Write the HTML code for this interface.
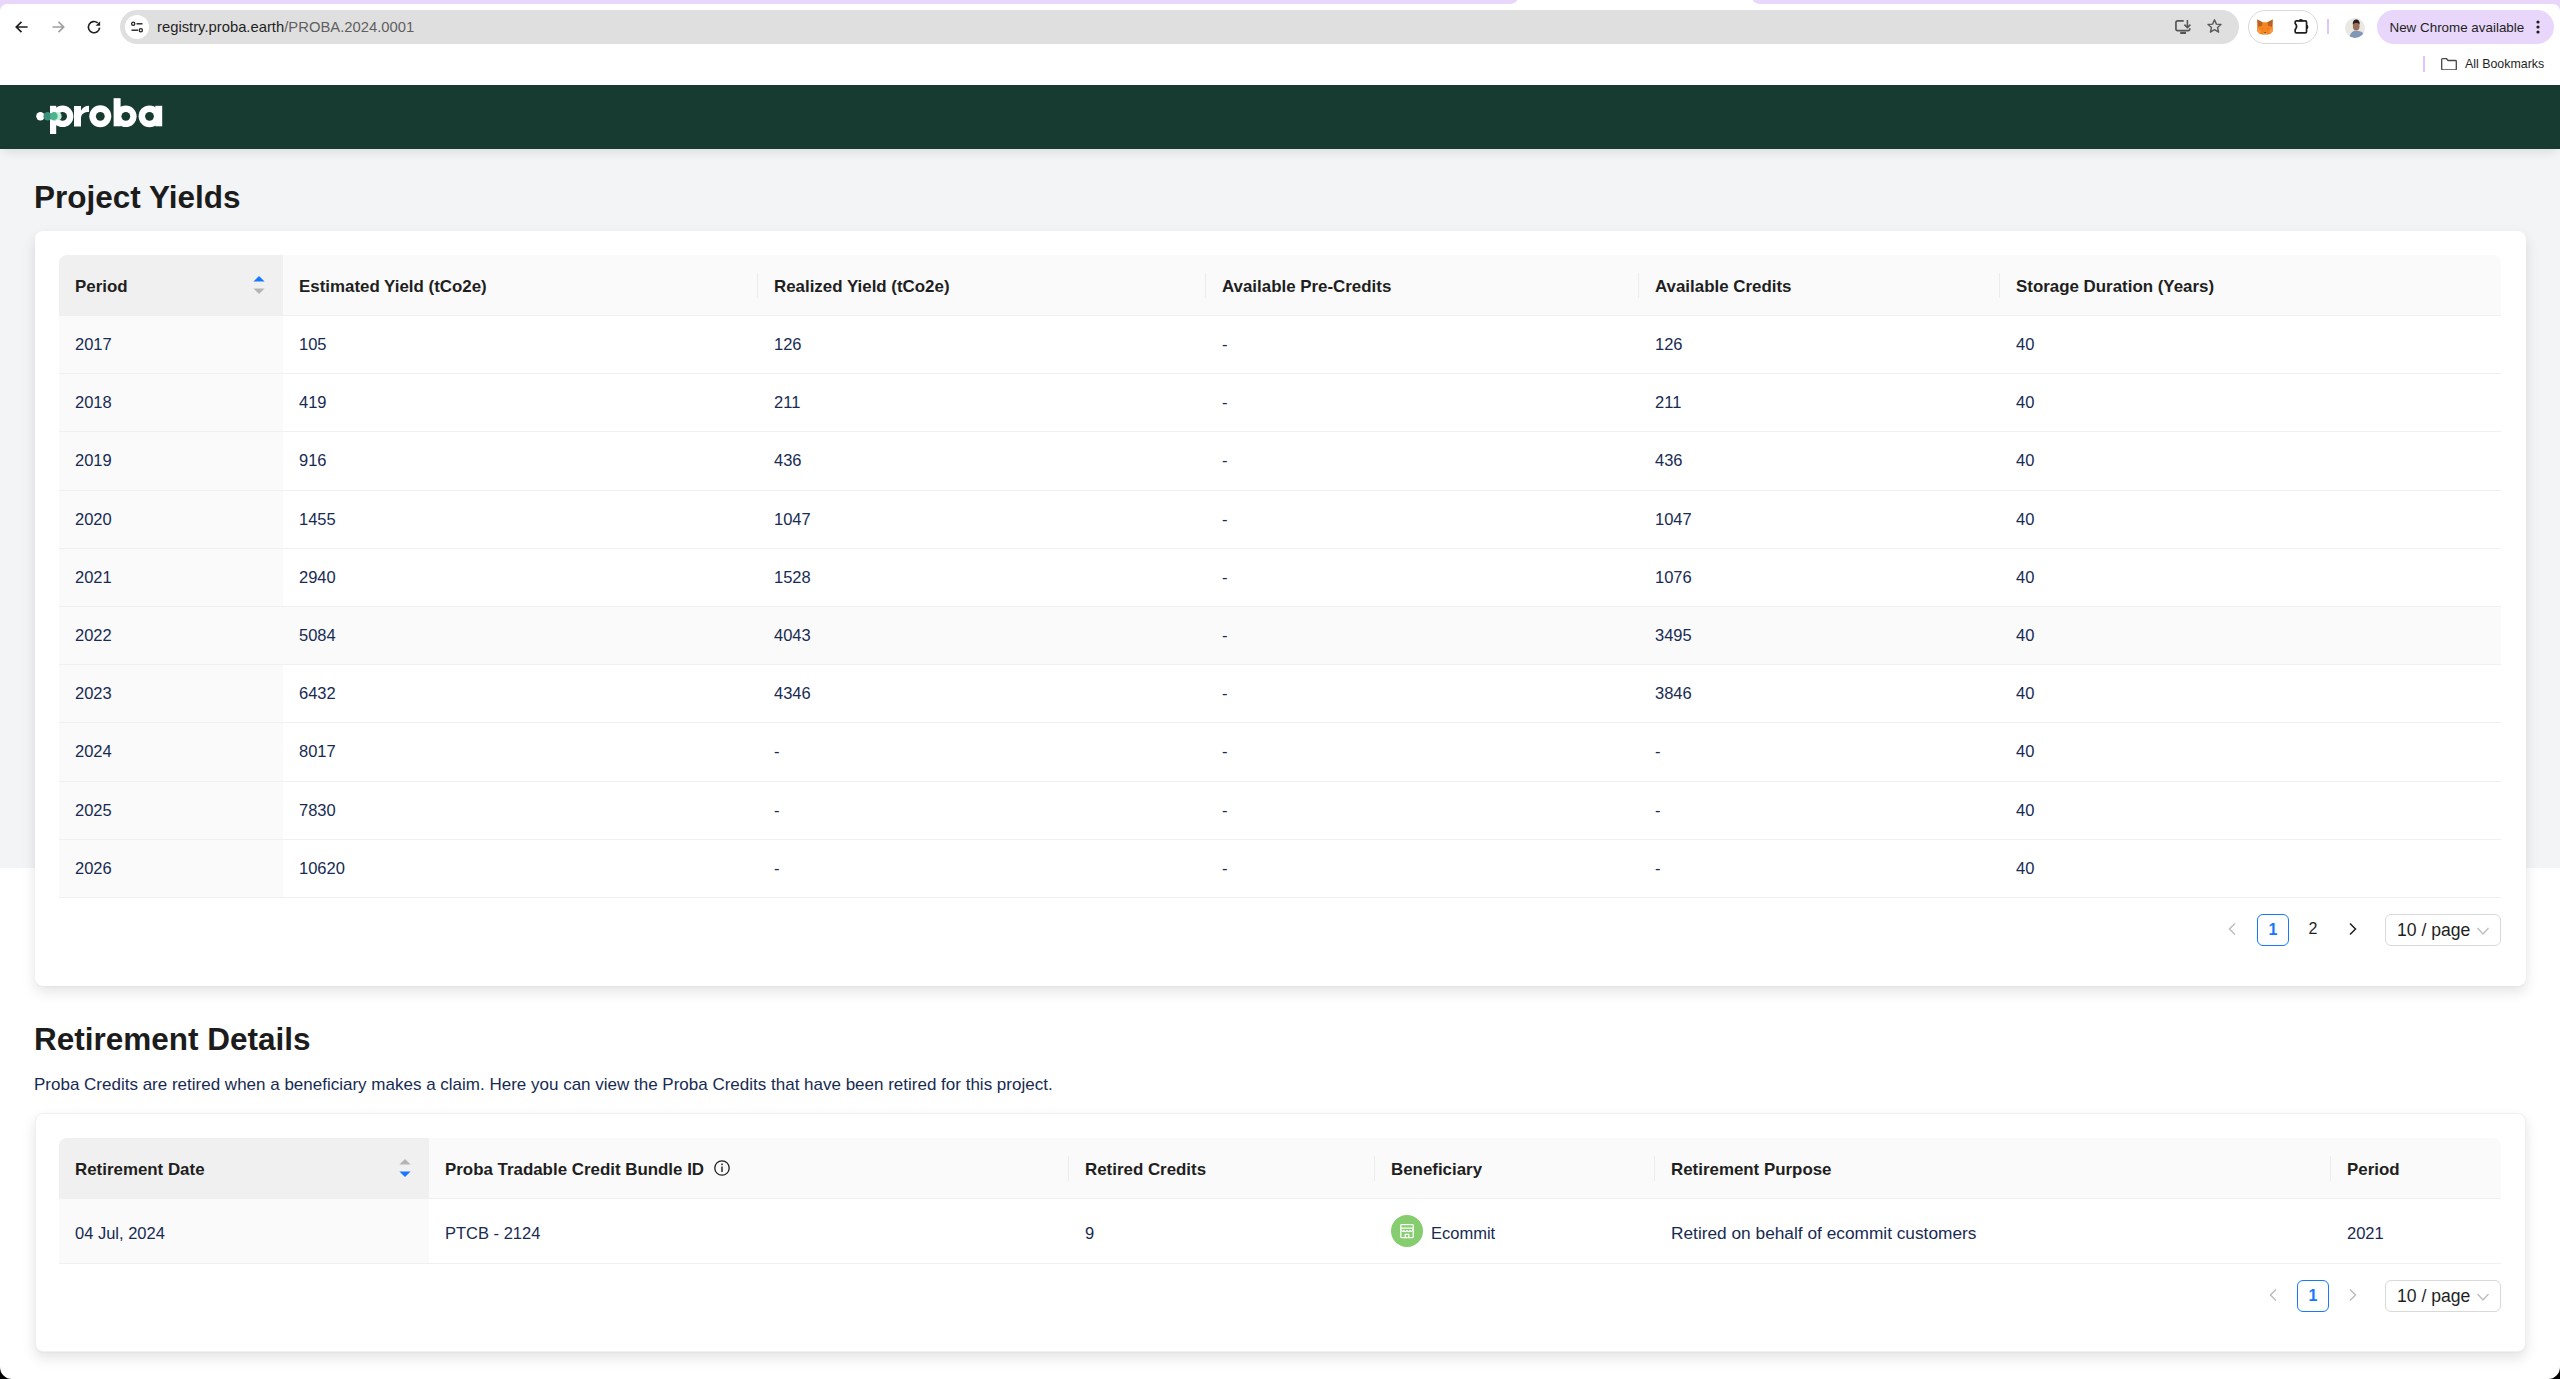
<!DOCTYPE html>
<html><head><meta charset="utf-8">
<style>
*{box-sizing:border-box;margin:0;padding:0}
html,body{width:2560px;height:1379px;overflow:hidden;background:#fff;font-family:"Liberation Sans",sans-serif}
.abs{position:absolute}
#tabbar{position:absolute;left:0;top:0;width:2560px;height:10px;background:#e8d7fb}
#acttab{position:absolute;left:1508px;top:0;width:254px;height:10px;background:#fff}
#tabL{position:absolute;left:0;top:0;width:1517px;height:4px;background:#e8d7fb;border-bottom-right-radius:8px 4px}
#tabR{position:absolute;left:1753px;top:0;width:807px;height:4px;background:#e8d7fb;border-bottom-left-radius:8px 4px}
#toolbar{position:absolute;left:0;top:4px;width:2560px;height:81px;background:#fff;border-radius:7px 7px 0 0}
#omni{position:absolute;left:120px;top:10px;width:2119px;height:34px;background:#dfdfdf;border-radius:17px}
#siteic{position:absolute;left:125px;top:15px;width:24px;height:24px;border-radius:12px;background:#fff}
#url{position:absolute;left:157px;top:18px;font-size:14.8px;line-height:18px;color:#1f1f1f;white-space:nowrap}
#url span{color:#5f5f5f}
#extpill{position:absolute;left:2248px;top:10px;width:70px;height:34px;border:1px solid #d9d9d9;border-radius:17px}
#sep1{position:absolute;left:2327px;top:19px;width:2px;height:15px;background:#dcc6f9}
#avatar{position:absolute;left:2345px;top:17.5px;width:20px;height:20px;border-radius:10px;background:#ebe8e4;overflow:hidden}
#newchrome{position:absolute;left:2377px;top:10px;width:177px;height:34px;border-radius:17px;background:#e8d7fb}
#newchrome .t{position:absolute;left:12.5px;top:9.5px;font-size:13.4px;line-height:16px;color:#1f1f1f;white-space:nowrap}
#sep2{position:absolute;left:2423px;top:56px;width:2px;height:16px;background:#dcc6f9}
#bm{position:absolute;left:2465px;top:57px;font-size:12.4px;line-height:15px;color:#1f1f1f;white-space:nowrap}
#hdr{position:absolute;left:0;top:85px;width:2560px;height:64px;background:#173b30;z-index:3;box-shadow:0 6px 10px -3px rgba(0,0,0,.10)}
#pagebg{position:absolute;left:0;top:149px;width:2560px;height:719px;background:#f3f4f6}
h2{position:absolute;left:34px;font-size:31.5px;font-weight:700;color:#1c1c1c;white-space:nowrap;line-height:38px}
.card{position:absolute;left:35px;width:2491px;background:#fff;border-radius:8px;box-shadow:0 6px 14px 0 rgba(0,0,0,.11),0 1px 2px rgba(0,0,0,.03)}
.tbl{position:absolute;left:59px;width:2442px}
.th{position:absolute;top:0;height:61px;background:#fafafa;border-bottom:1px solid #f0f0f0}
.th .t{position:absolute;left:16px;top:22px;font-size:16.9px;font-weight:700;color:#1f1f1f;white-space:nowrap;line-height:20px}
.th.sc{background:#f0f0f0}
.th .sep{position:absolute;left:-1px;top:18px;width:1px;height:25px;background:#ececec}
.tr{position:absolute;left:0;width:2442px;height:58.2px;border-bottom:1px solid #f0f0f0;background:#fff}
.tr.hov{background:#fafafa}
.td{position:absolute;top:0;height:57.2px;padding-left:16px;font-size:16.5px;line-height:56px;color:#172b53;white-space:nowrap}
.td.sc{background:#fafafa}
p.desc{position:absolute;left:34px;top:1074px;font-size:17px;line-height:22px;color:#172b53;white-space:nowrap}
.pg{position:absolute;height:32px;font-size:16px;line-height:30px;text-align:center;color:#1f1f1f}
.pgact{border:1px solid #1677ff;border-radius:6px;color:#1677ff;font-weight:700}
.sel{border:1px solid #d9d9d9;border-radius:6px;text-align:left;padding-left:11px;font-size:17.6px}
</style></head><body>

<div id="tabbar"></div><div id="acttab"></div><div id="tabL"></div><div id="tabR"></div>
<div id="toolbar"></div>
<!-- nav icons -->
<svg class="abs" style="left:13px;top:18px" width="18" height="18" viewBox="0 0 18 18"><path d="M14.6 9H3.5M8.5 3.8L3.3 9l5.2 5.2" fill="none" stroke="#1f1f1f" stroke-width="1.7"/></svg>
<svg class="abs" style="left:49px;top:18px" width="18" height="18" viewBox="0 0 18 18"><path d="M3.4 9h11.1M9.5 3.8L14.7 9l-5.2 5.2" fill="none" stroke="#a0a0a0" stroke-width="1.7"/></svg>
<svg class="abs" style="left:85px;top:18px" width="18" height="18" viewBox="0 0 18 18"><path d="M14.6 9.6A5.6 5.6 0 1 1 12.7 4.9" fill="none" stroke="#1f1f1f" stroke-width="1.6"/><path d="M15.1 3.2V7.7H10.6Z" fill="#1f1f1f"/></svg>
<div id="omni"></div><div id="siteic"></div>
<svg class="abs" style="left:129px;top:19px" width="16" height="16" viewBox="0 0 16 16"><circle cx="4.2" cy="4.8" r="1.6" fill="none" stroke="#1f1f1f" stroke-width="1.3"/><path d="M7.5 4.8h6" stroke="#1f1f1f" stroke-width="1.4"/><circle cx="11.8" cy="11.2" r="1.6" fill="none" stroke="#1f1f1f" stroke-width="1.3"/><path d="M2.5 11.2h6.5" stroke="#1f1f1f" stroke-width="1.4"/></svg>
<div id="url">registry.proba.earth<span>/PROBA.2024.0001</span></div>
<svg class="abs" style="left:2174px;top:19px" width="18" height="16" viewBox="0 0 18 16"><path d="M9.7 1.85H3.5A1.5 1.5 0 0 0 1.95 3.4V10.1A1.5 1.5 0 0 0 3.5 11.65H14.2A1.5 1.5 0 0 0 15.75 10.1V9.3" fill="none" stroke="#555" stroke-width="1.7"/><rect x="6.2" y="12.8" width="5.8" height="2.2" fill="#555"/><path d="M13.4 1v7.2M10.4 5.6l3 3 3-3" fill="none" stroke="#555" stroke-width="1.5"/></svg>
<svg class="abs" style="left:2206px;top:18px" width="17" height="17" viewBox="0 0 17 17"><path d="M8.5 1.8l1.9 4.3 4.6.4-3.5 3 1.1 4.6-4.1-2.5-4.1 2.5 1.1-4.6-3.5-3 4.6-.4z" fill="none" stroke="#5a5a5a" stroke-width="1.4" stroke-linejoin="round"/></svg>
<div id="extpill"></div>
<svg class="abs" style="left:2257px;top:18.5px" width="16" height="16" viewBox="0 0 16 16"><path d="M0.3 0.5L5.5 3.2H10.5L15.7 0.5L15.8 7L16 12L13.5 14.8L10 15.8H6L2.5 14.8L0 12L0.2 7Z" fill="#f5861f"/><path d="M0.3 0.5L5.5 3.2L5 6.8L1 7.8Z M15.7 0.5L10.5 3.2L11 6.8L15 7.8Z" fill="#b9602a"/><path d="M4 9.2L6.3 9.8L5 10.6Z M12 9.2L9.7 9.8L11 10.6Z" fill="#c46a2c"/><path d="M1 9L4 12.5L2.5 14.8L0 12Z M15 9L12 12.5L13.5 14.8L16 12Z" fill="#f79a4a"/><path d="M6 15.2L8 16L10 15.2L9.2 14.3H6.8Z" fill="#d9c3b5"/><path d="M7 13.6H9L8 14.6Z" fill="#1a1a1a"/></svg>
<svg class="abs" style="left:2293px;top:17px" width="18" height="18" viewBox="0 0 18 18"><path d="M3.2 3.95H12.35Q13.55 3.95 13.55 5.15V14.65Q13.55 15.85 12.35 15.85H3.35Q2.15 15.85 2.15 14.65V12.6Q5 9.5 2.15 6.4V5.15Q2.15 3.95 3.35 3.95Z" fill="none" stroke="#1f1f1f" stroke-width="1.7" stroke-linejoin="round"/><path d="M5.6 4.4A2.3 2.3 0 0 1 10.2 4.4Z" fill="#1f1f1f"/><path d="M13.2 7.7A2.2 2.2 0 0 1 13.2 12.1Z" fill="#1f1f1f"/></svg>
<div id="sep1"></div>
<div id="avatar"><svg width="20" height="20" viewBox="0 0 20 20"><path d="M4 21C5 14.5 8 12.8 11 12.8C15 12.8 18 14 19.5 17L17 21Z" fill="#7f98b8"/><ellipse cx="11.2" cy="8.2" rx="3.3" ry="4.4" fill="#9c6e58"/><path d="M7.8 6.8C7.6 2.6 9.5 1.4 11.3 1.4C13.5 1.4 14.9 2.8 14.7 6.8C13.8 4.6 9 4.4 7.8 6.8Z" fill="#2a211e"/></svg></div>
<div id="newchrome"><div class="t">New Chrome available</div>
<svg class="abs" style="left:158px;top:10px" width="6" height="14" viewBox="0 0 6 14"><circle cx="3" cy="2" r="1.6" fill="#1f1f1f"/><circle cx="3" cy="7" r="1.6" fill="#1f1f1f"/><circle cx="3" cy="12" r="1.6" fill="#1f1f1f"/></svg></div>
<div id="sep2"></div>
<svg class="abs" style="left:2441px;top:58px" width="16" height="12" viewBox="0 0 16 12"><path d="M0.7 1.5a.8.8 0 0 1 .8-.8h4l1.6 1.8h7.4a.8.8 0 0 1 .8.8v7.7a.8.8 0 0 1-.8.8H1.5a.8.8 0 0 1-.8-.8z" fill="none" stroke="#474747" stroke-width="1.3"/></svg>
<div id="bm">All Bookmarks</div>

<div id="hdr">
<svg class="abs" style="left:30px;top:8px" width="140" height="52" viewBox="30 93 140 52">
<circle cx="40.4" cy="116.2" r="4.2" fill="#fff"/>
<rect x="50" y="105.8" width="6.2" height="28.2" fill="#fff"/>
<circle cx="62.6" cy="116.3" r="10.8" fill="#fff"/><circle cx="62.6" cy="116.3" r="4.4" fill="#173b30"/>
<circle cx="47.6" cy="116.2" r="4.2" fill="#3a9179"/>
<circle cx="54.3" cy="116.2" r="4.2" fill="#4cb48d"/>
<circle cx="57.6" cy="116.2" r="4" fill="#c3ecd9"/>
<circle cx="54" cy="116.2" r="3.6" fill="#4cb48d"/>
<path d="M74 106h7v4.5c1.5-3 4.5-4.7 8-4.7v6.2c-4.5 0-8 1.5-8 6.5v8H74z" fill="#fff"/>
<circle cx="100.3" cy="116.3" r="11" fill="#fff"/><circle cx="100.3" cy="116.3" r="4.4" fill="#173b30"/>
<rect x="113.6" y="98.2" width="7" height="28.1" fill="#fff"/>
<circle cx="125.8" cy="116.3" r="10.8" fill="#fff"/><circle cx="125.8" cy="116.3" r="4.4" fill="#173b30"/>
<circle cx="149.5" cy="116.3" r="10.9" fill="#fff"/><circle cx="149.5" cy="116.3" r="4.4" fill="#173b30"/>
<rect x="155.3" y="105.8" width="6.9" height="20.5" fill="#fff"/>
</svg>
</div>
<div id="pagebg"></div>

<h2 style="top:178px">Project Yields</h2>
<div class="card" style="top:231px;height:755px"></div>
<div class="tbl" style="top:255px;height:642px">
 <div class="th sc" style="left:0;width:224px;border-top-left-radius:8px"><div class="t">Period</div>
  <svg class="abs" style="left:194px;top:20px" width="12" height="20" viewBox="0 0 12 20"><path d="M6 1L11.6 6.6H0.4z" fill="#1677ff"/><path d="M6 19L11.6 13.4H0.4z" fill="#b5b5b5"/></svg></div>
 <div class="th" style="left:224px;width:475px"><div class="t">Estimated Yield (tCo2e)</div></div>
 <div class="th" style="left:699px;width:448px"><div class="sep"></div><div class="t">Realized Yield (tCo2e)</div></div>
 <div class="th" style="left:1147px;width:433px"><div class="sep"></div><div class="t">Available Pre-Credits</div></div>
 <div class="th" style="left:1580px;width:361px"><div class="sep"></div><div class="t">Available Credits</div></div>
 <div class="th" style="left:1941px;width:501px;border-top-right-radius:8px"><div class="sep"></div><div class="t">Storage Duration (Years)</div></div>
<div class="tr" style="top:61.00px"><div class="td sc" style="left:0px;width:224px">2017</div><div class="td" style="left:224px;width:475px">105</div><div class="td" style="left:699px;width:448px">126</div><div class="td" style="left:1147px;width:433px">-</div><div class="td" style="left:1580px;width:361px">126</div><div class="td" style="left:1941px;width:500px">40</div></div>
<div class="tr" style="top:119.20px"><div class="td sc" style="left:0px;width:224px">2018</div><div class="td" style="left:224px;width:475px">419</div><div class="td" style="left:699px;width:448px">211</div><div class="td" style="left:1147px;width:433px">-</div><div class="td" style="left:1580px;width:361px">211</div><div class="td" style="left:1941px;width:500px">40</div></div>
<div class="tr" style="top:177.40px"><div class="td sc" style="left:0px;width:224px">2019</div><div class="td" style="left:224px;width:475px">916</div><div class="td" style="left:699px;width:448px">436</div><div class="td" style="left:1147px;width:433px">-</div><div class="td" style="left:1580px;width:361px">436</div><div class="td" style="left:1941px;width:500px">40</div></div>
<div class="tr" style="top:235.60px"><div class="td sc" style="left:0px;width:224px">2020</div><div class="td" style="left:224px;width:475px">1455</div><div class="td" style="left:699px;width:448px">1047</div><div class="td" style="left:1147px;width:433px">-</div><div class="td" style="left:1580px;width:361px">1047</div><div class="td" style="left:1941px;width:500px">40</div></div>
<div class="tr" style="top:293.80px"><div class="td sc" style="left:0px;width:224px">2021</div><div class="td" style="left:224px;width:475px">2940</div><div class="td" style="left:699px;width:448px">1528</div><div class="td" style="left:1147px;width:433px">-</div><div class="td" style="left:1580px;width:361px">1076</div><div class="td" style="left:1941px;width:500px">40</div></div>
<div class="tr hov" style="top:352.00px"><div class="td sc" style="left:0px;width:224px">2022</div><div class="td" style="left:224px;width:475px">5084</div><div class="td" style="left:699px;width:448px">4043</div><div class="td" style="left:1147px;width:433px">-</div><div class="td" style="left:1580px;width:361px">3495</div><div class="td" style="left:1941px;width:500px">40</div></div>
<div class="tr" style="top:410.20px"><div class="td sc" style="left:0px;width:224px">2023</div><div class="td" style="left:224px;width:475px">6432</div><div class="td" style="left:699px;width:448px">4346</div><div class="td" style="left:1147px;width:433px">-</div><div class="td" style="left:1580px;width:361px">3846</div><div class="td" style="left:1941px;width:500px">40</div></div>
<div class="tr" style="top:468.40px"><div class="td sc" style="left:0px;width:224px">2024</div><div class="td" style="left:224px;width:475px">8017</div><div class="td" style="left:699px;width:448px">-</div><div class="td" style="left:1147px;width:433px">-</div><div class="td" style="left:1580px;width:361px">-</div><div class="td" style="left:1941px;width:500px">40</div></div>
<div class="tr" style="top:526.60px"><div class="td sc" style="left:0px;width:224px">2025</div><div class="td" style="left:224px;width:475px">7830</div><div class="td" style="left:699px;width:448px">-</div><div class="td" style="left:1147px;width:433px">-</div><div class="td" style="left:1580px;width:361px">-</div><div class="td" style="left:1941px;width:500px">40</div></div>
<div class="tr" style="top:584.80px"><div class="td sc" style="left:0px;width:224px">2026</div><div class="td" style="left:224px;width:475px">10620</div><div class="td" style="left:699px;width:448px">-</div><div class="td" style="left:1147px;width:433px">-</div><div class="td" style="left:1580px;width:361px">-</div><div class="td" style="left:1941px;width:500px">40</div></div>
</div>
<div class="abs" style="left:2225px;top:921px"><svg width="14" height="16" viewBox="0 0 14 16"><path d="M10 2.5L4.5 8l5.5 5.5" fill="none" stroke="#bdbdbd" stroke-width="1.5"/></svg></div>
<div class="pg pgact" style="left:2257px;top:914px;width:32px">1</div>
<div class="pg" style="left:2297px;top:914px;width:32px">2</div>
<div class="abs" style="left:2346px;top:921px"><svg width="14" height="16" viewBox="0 0 14 16"><path d="M4 2.5L9.5 8 4 13.5" fill="none" stroke="#1f1f1f" stroke-width="1.5"/></svg></div>
<div class="pg sel" style="left:2385px;top:914px;width:116px">10 / page
 <svg class="abs" style="left:90px;top:9px" width="14" height="14" viewBox="0 0 14 14"><path d="M1.5 4l5.5 6 5.5-6" fill="none" stroke="#bdbdbd" stroke-width="1.3"/></svg></div>

<h2 style="top:1020px">Retirement Details</h2>
<p class="desc">Proba Credits are retired when a beneficiary makes a claim. Here you can view the Proba Credits that have been retired for this project.</p>
<div class="card" style="top:1113px;height:239px;border:1px solid #f0f0f0"></div>
<div class="tbl" style="top:1138px;height:125px">
 <div class="th sc" style="left:0;width:370px;height:61px;border-top-left-radius:8px"><div class="t">Retirement Date</div>
  <svg class="abs" style="left:340px;top:20px" width="12" height="20" viewBox="0 0 12 20"><path d="M6 1L11.6 6.6H0.4z" fill="#b5b5b5"/><path d="M6 19L11.6 13.4H0.4z" fill="#1677ff"/></svg></div>
 <div class="th" style="left:370px;width:640px;height:61px"><div class="t">Proba Tradable Credit Bundle ID</div>
  <svg class="abs" style="left:284px;top:21px" width="18" height="18" viewBox="0 0 18 18"><circle cx="9" cy="9" r="7.2" fill="none" stroke="#1f1f1f" stroke-width="1.3"/><rect x="8.3" y="7.5" width="1.4" height="5.5" fill="#1f1f1f"/><circle cx="9" cy="5.3" r=".9" fill="#1f1f1f"/></svg></div>
 <div class="th" style="left:1010px;width:306px;height:61px"><div class="sep"></div><div class="t">Retired Credits</div></div>
 <div class="th" style="left:1316px;width:280px;height:61px"><div class="sep"></div><div class="t">Beneficiary</div></div>
 <div class="th" style="left:1596px;width:676px;height:61px"><div class="sep"></div><div class="t">Retirement Purpose</div></div>
 <div class="th" style="left:2272px;width:170px;height:61px;border-top-right-radius:8px"><div class="sep"></div><div class="t">Period</div></div>
 <div class="tr" style="top:61px;height:65px">
  <div class="td sc" style="left:0;width:370px;height:64px;line-height:68px">04 Jul, 2024</div>
  <div class="td" style="left:370px;width:640px;height:64px;line-height:68px">PTCB - 2124</div>
  <div class="td" style="left:1010px;width:306px;height:64px;line-height:68px">9</div>
  <div class="td" style="left:1316px;width:280px;height:64px;line-height:68px"><svg class="abs" style="left:16px;top:16px" width="32" height="32" viewBox="0 0 32 32"><circle cx="16" cy="16" r="16" fill="#86cd6f"/><path d="M10.6 9.6H21.4Q22.2 9.6 22.2 10.4V21.8Q22.2 22.6 21.4 22.6H10.6Q9.8 22.6 9.8 21.8V10.4Q9.8 9.6 10.6 9.6Z M9.8 13.1H22.2" fill="none" stroke="#fff" stroke-width="1.25"/><path d="M9.8 14.6Q11.35 17.4 12.9 15.6Q14.45 17.4 16 15.6Q17.55 17.4 19.1 15.6Q20.65 17.4 22.2 14.6" fill="none" stroke="#fff" stroke-width="1.25"/><path d="M14.2 22.6V19.3H17.8V22.6" fill="none" stroke="#fff" stroke-width="1.25"/></svg><span style="padding-left:40px">Ecommit</span></div>
  <div class="td" style="left:1596px;width:676px;height:64px;line-height:68px;font-size:17.3px">Retired on behalf of ecommit customers</div>
  <div class="td" style="left:2272px;width:169px;height:64px;line-height:68px">2021</div>
 </div>
</div>
<div class="abs" style="left:2266px;top:1287px"><svg width="14" height="16" viewBox="0 0 14 16"><path d="M10 2.5L4.5 8l5.5 5.5" fill="none" stroke="#bdbdbd" stroke-width="1.5"/></svg></div>
<div class="pg pgact" style="left:2297px;top:1280px;width:32px">1</div>
<div class="abs" style="left:2346px;top:1287px"><svg width="14" height="16" viewBox="0 0 14 16"><path d="M4 2.5L9.5 8 4 13.5" fill="none" stroke="#bdbdbd" stroke-width="1.5"/></svg></div>
<div class="pg sel" style="left:2385px;top:1280px;width:116px">10 / page
 <svg class="abs" style="left:90px;top:9px" width="14" height="14" viewBox="0 0 14 14"><path d="M1.5 4l5.5 6 5.5-6" fill="none" stroke="#bdbdbd" stroke-width="1.3"/></svg></div>
<div class="abs" style="left:0;top:1367px;width:12px;height:12px;background:#000;clip-path:path('M0 0A12 12 0 0 0 12 12H0z')"></div>
<div class="abs" style="left:2548px;top:1367px;width:12px;height:12px;background:#000;clip-path:path('M12 0A12 12 0 0 1 0 12H12z')"></div>
</body></html>
